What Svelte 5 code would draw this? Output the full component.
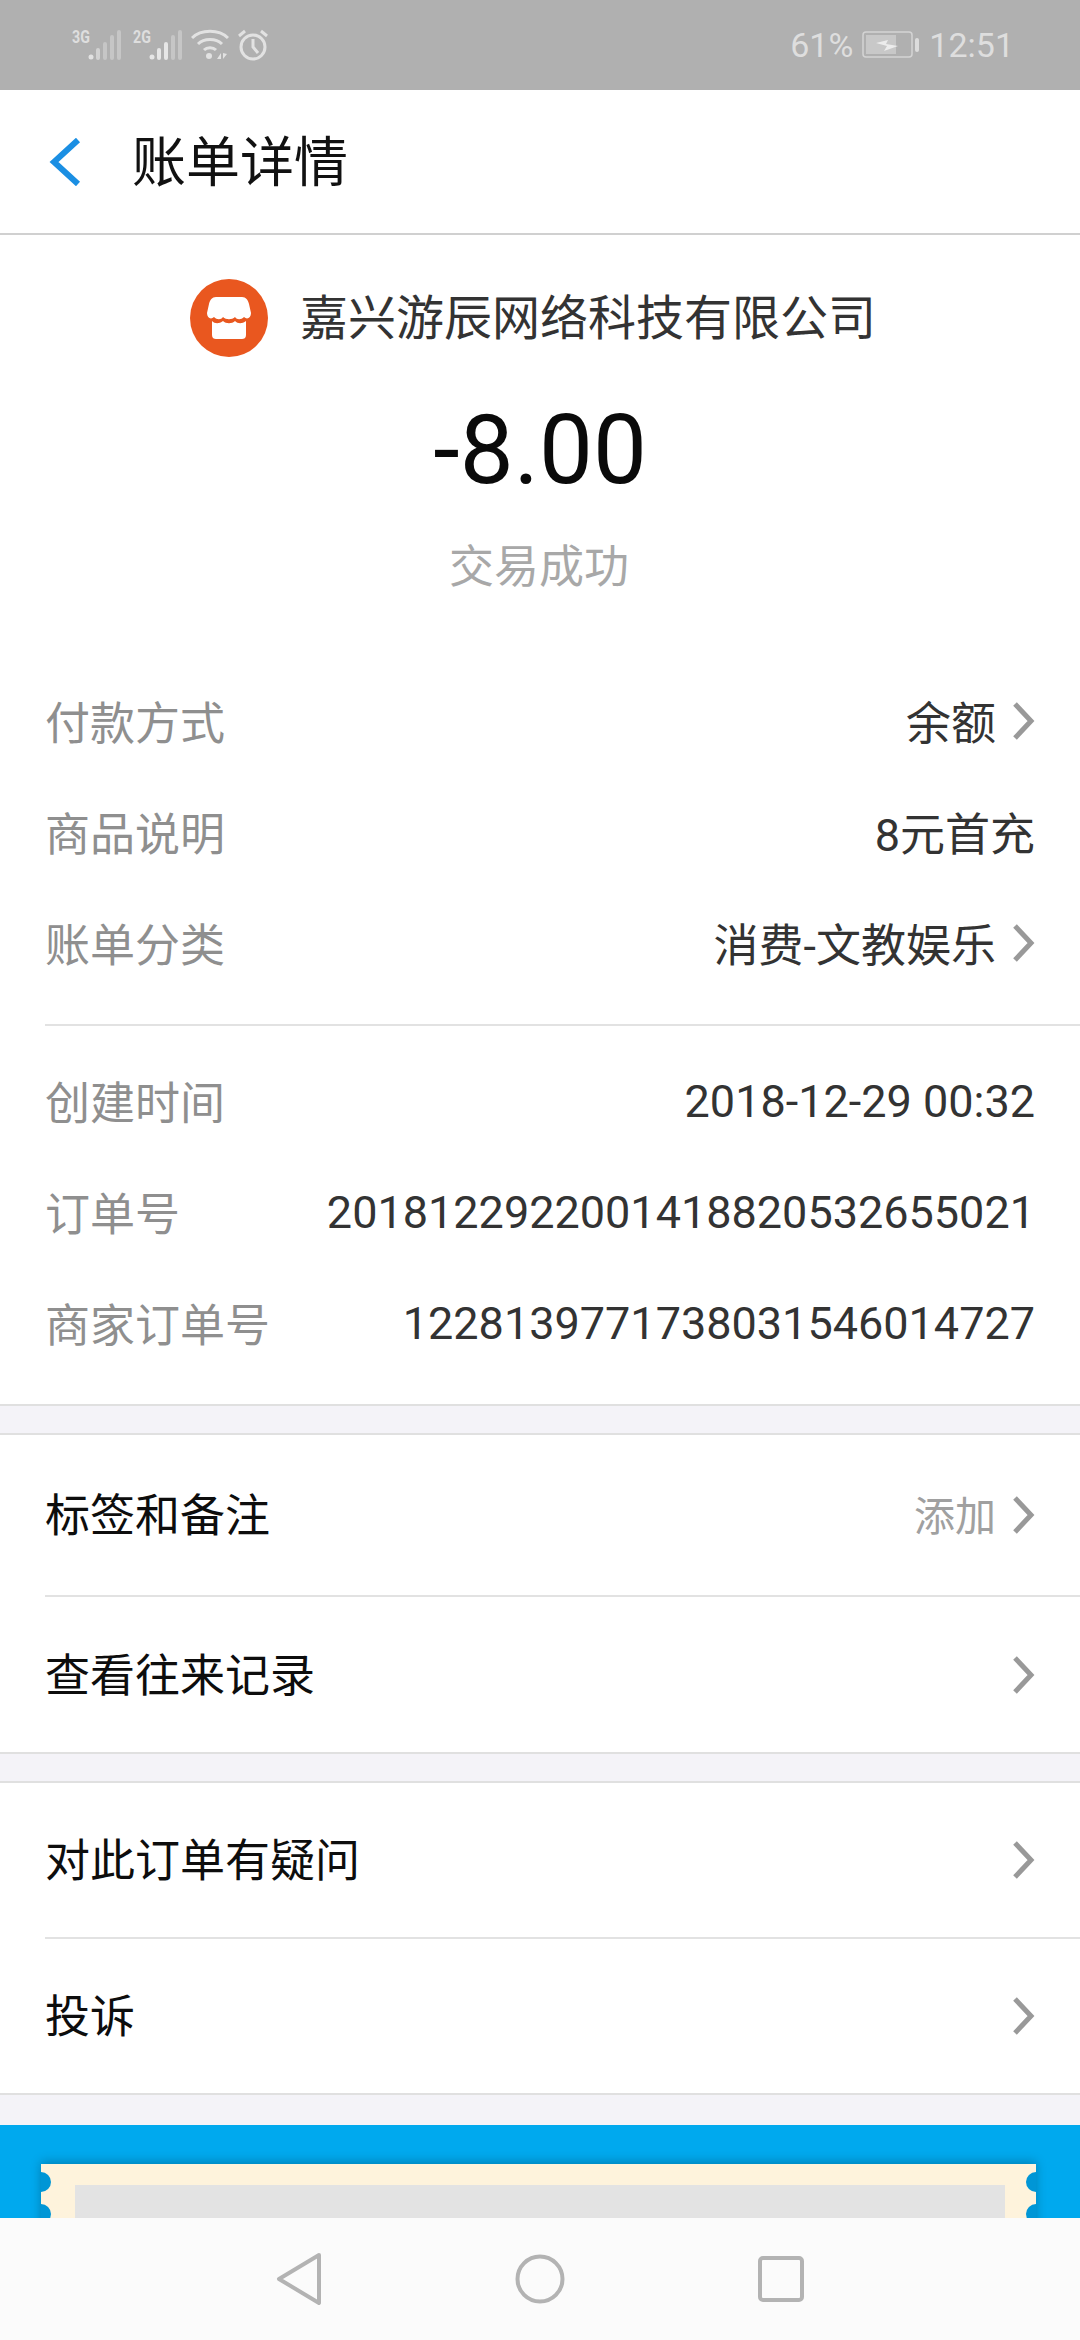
<script lang="ts">
	type Row = { label: string; value: string; more?: boolean };

	const payRows: Row[] = [
		{ label: '付款方式', value: '余额', more: true },
		{ label: '商品说明', value: '8元首充' },
		{ label: '账单分类', value: '消费-文教娱乐', more: true }
	];

	const orderRows: Row[] = [
		{ label: '创建时间', value: '2018-12-29 00:32' },
		{ label: '订单号', value: '2018122922001418820532655021' },
		{ label: '商家订单号', value: '1228139771738031546014727' }
	];
</script>

{#snippet chevron()}
	<svg class="chevron" viewBox="0 0 22 38" width="22" height="38" aria-hidden="true">
		<path d="M2 2 L18 19 L2 36" fill="none" stroke="#999" stroke-width="5" />
	</svg>
{/snippet}

<div class="page">
	<div class="status-bar">
		<div class="status-left">
			<span class="net">3G</span>
			<svg class="bars" viewBox="0 0 34 30" width="34" height="30">
				<circle cx="3" cy="27" r="2.5" fill="#e2e2e2" />
				<rect x="8" y="18" width="4" height="12" rx="2" fill="#d2d2d2" />
				<rect x="15" y="12" width="4" height="18" rx="2" fill="#c6c6c6" />
				<rect x="22" y="5" width="4" height="25" rx="2" fill="#c6c6c6" />
				<rect x="29" y="0" width="4" height="30" rx="2" fill="#c6c6c6" />
			</svg>
			<span class="net second">2G</span>
			<svg class="bars" viewBox="0 0 34 30" width="34" height="30">
				<circle cx="3" cy="27" r="2.5" fill="#e6e6e6" />
				<rect x="8" y="18" width="4" height="12" rx="2" fill="#e6e6e6" />
				<rect x="15" y="12" width="4" height="18" rx="2" fill="#e6e6e6" />
				<rect x="22" y="5" width="4" height="25" rx="2" fill="#c6c6c6" />
				<rect x="29" y="0" width="4" height="30" rx="2" fill="#c6c6c6" />
			</svg>
			<svg class="wifi" viewBox="0 0 38 32" width="38" height="32" fill="none" stroke="#e2e2e2" stroke-width="3">
				<path d="M1 9 C10 0 28 0 37 9" />
				<path d="M7 15 C13 9 25 9 31 15" />
				<path d="M13 21 C16 18 22 18 25 21" />
				<circle cx="18" cy="27" r="3" fill="#e2e2e2" stroke="none" />
				<path d="M26 30 L30 30 L30 24 Z M32 24 L32 30 L36 25 Z" fill="#e2e2e2" stroke="none" />
			</svg>
			<svg class="alarm" viewBox="0 0 32 32" width="32" height="32" fill="none" stroke="#e2e2e2" stroke-width="3">
				<circle cx="16" cy="18" r="12" />
				<path d="M16 10 L16 18 L21 24" />
				<path d="M2 7 L8 2" />
				<path d="M24 2 L30 7" />
			</svg>
		</div>
		<div class="status-right">
			<span>61%</span>
			<svg class="battery" viewBox="0 0 58 28" width="58" height="28">
				<rect x="1" y="1" width="49" height="25" rx="3" fill="none" stroke="#d4d4d4" stroke-width="1.5" />
				<rect x="4" y="4" width="30" height="19" fill="#c8c8c8" />
				<path d="M14 12 L26 9 L24 13 L36 15 L22 20 L25 15 Z" fill="#ececec" />
				<rect x="53" y="7" width="4" height="14" rx="2" fill="#dcdcdc" />
			</svg>
			<span>12:51</span>
		</div>
	</div>

	<header class="app-bar">
		<svg class="back" viewBox="0 0 34 48" width="34" height="48" aria-hidden="true">
			<path d="M30 2 L6 24 L30 46" fill="none" stroke="#1b8fe3" stroke-width="6" />
		</svg>
		<h1>账单详情</h1>
	</header>

	<section class="summary">
		<div class="merchant">
			<svg viewBox="0 0 78 78" width="78" height="78" aria-hidden="true">
				<circle cx="39" cy="39" r="39" fill="#e9571f" />
				<path
					d="M26 18 H52 C56 18 58 21 59 25 L61 34 C61 39 57 41 54 38 C51 41 47 41 45 38 C42 41 36 41 33 38 C31 41 27 41 24 38 C21 41 17 39 17 34 L19 25 C20 21 22 18 26 18 Z"
					fill="#fff"
				/>
				<path
					d="M22 42 C25 45 29 45 33 42 C36 45 42 45 45 42 C48 45 52 45 56 42 V56 C56 59 54 60 52 60 H26 C24 60 22 59 22 56 Z"
					fill="#fff"
				/>
			</svg>
			<span>嘉兴游辰网络科技有限公司</span>
		</div>
		<div class="amount">-8.00</div>
		<div class="result">交易成功</div>
	</section>

	<section class="details">
		<div class="group first">
			{#each payRows as row}
				<div class="row">
					<span class="label">{row.label}</span>
					<span class="value">{row.value}</span>
					{#if row.more}{@render chevron()}{/if}
				</div>
			{/each}
		</div>
		<div class="group second-group">
			{#each orderRows as row}
				<div class="row">
					<span class="label">{row.label}</span>
					<span class="value">{row.value}</span>
				</div>
			{/each}
		</div>
	</section>

	<section class="list">
		<div class="item h160">
			<span>标签和备注</span>
			<span class="hint">添加</span>
			{@render chevron()}
		</div>
		<div class="item h157">
			<span>查看往来记录</span>
			{@render chevron()}
		</div>
	</section>

	<section class="list">
		<div class="item h154">
			<span>对此订单有疑问</span>
			{@render chevron()}
		</div>
		<div class="item">
			<span>投诉</span>
			{@render chevron()}
		</div>
	</section>

	<div class="banner">
		<div class="ticket">
			<div class="ticket-inner"></div>
			<i class="notch left n1"></i>
			<i class="notch left n2"></i>
			<i class="notch right n1"></i>
			<i class="notch right n2"></i>
		</div>
	</div>

	<nav class="nav-bar">
		<svg viewBox="0 0 46 52" width="46" height="52" fill="none" stroke="#b3b3b3" stroke-width="4" stroke-linejoin="round">
			<path d="M43 2 L3 26 L43 50 Z" />
		</svg>
		<svg viewBox="0 0 50 50" width="50" height="50" fill="none" stroke="#b3b3b3" stroke-width="4">
			<circle cx="25" cy="25" r="22.5" />
		</svg>
		<svg viewBox="0 0 46 46" width="46" height="46" fill="none" stroke="#b3b3b3" stroke-width="4">
			<rect x="2" y="2" width="42" height="42" rx="3" />
		</svg>
	</nav>
</div>

<style>
	:global(body) {
		margin: 0;
		background: #f4f3f8;
	}

	.page {
		position: relative;
		width: 1080px;
		height: 2340px;
		overflow: hidden;
		display: flex;
		flex-direction: column;
		font-family: 'Noto Sans CJK SC', Roboto, sans-serif;
		background: #f4f3f8;
	}

	/* Status bar */
	.status-bar {
		height: 90px;
		flex: none;
		background: #b0b0b0;
		display: flex;
		justify-content: space-between;
		align-items: center;
		padding: 0 66px 0 72px;
		color: #dedede;
		font-family: Roboto, sans-serif;
	}

	.status-left,
	.status-right {
		display: flex;
		align-items: center;
	}

	.status-left {
		height: 32px;
	}

	.net {
		font-size: 19px;
		font-weight: 700;
		line-height: 16px;
		align-self: flex-start;
		width: 17px;
		transform: scaleX(0.75);
		transform-origin: left;
	}

	.net.second {
		margin-left: 11px;
	}

	.bars {
		margin-left: -1px;
	}

	.wifi {
		margin-left: 8px;
	}

	.alarm {
		margin-left: 8px;
	}

	.status-right {
		font-size: 34px;
		gap: 9px;
	}

	/* Header */
	.app-bar {
		height: 145px;
		flex: none;
		box-sizing: border-box;
		background: #fff;
		border-bottom: 2px solid #d0d0d0;
		display: flex;
		align-items: center;
		padding-left: 48px;
		gap: 50px;
	}

	.app-bar h1 {
		margin: 0 0 6px;
		font-size: 54px;
		font-weight: 400;
		color: #111;
		line-height: 1;
	}

	/* Summary */
	.summary {
		flex: none;
		height: 430px;
		background: #fff;
		display: flex;
		flex-direction: column;
		align-items: center;
	}

	.merchant {
		display: flex;
		align-items: center;
		gap: 32px;
		height: 78px;
		margin-top: 44px;
		margin-right: 14px;
		font-size: 48px;
		color: #333;
		white-space: nowrap;
	}

	.merchant span {
		padding-bottom: 8px;
	}

	.amount {
		font-family: Roboto, sans-serif;
		font-size: 96px;
		line-height: 100px;
		margin-top: 43px;
		color: #0a0a0a;
	}

	.result {
		font-size: 45px;
		line-height: 60px;
		margin-top: 34px;
		margin-right: 2px;
		color: #a8a8a8;
	}

	/* Detail rows */
	.details {
		flex: none;
		background: #fff;
		padding-left: 45px;
		border-bottom: 2px solid #e0e0e0;
	}

	.group.first {
		padding-bottom: 26px;
		border-bottom: 2px solid #e2e2e2;
	}

	.group.second-group {
		padding-top: 19px;
		padding-bottom: 26px;
	}

	.row {
		height: 111px;
		display: flex;
		align-items: center;
		padding-right: 45px;
		font-size: 45px;
	}

	.label {
		color: #8f8f8f;
		font-size: 45px;
		margin-right: auto;
		white-space: nowrap;
	}

	.value {
		color: #333;
		font-family: Roboto, 'Noto Sans CJK SC', sans-serif;
		white-space: nowrap;
	}

	.second-group .value {
		padding-top: 2px;
	}

	.chevron {
		flex: none;
		margin-left: 17px;
	}

	/* Link rows */
	.list {
		flex: none;
		margin-top: 27px;
		background: #fff;
		padding-left: 45px;
		border-top: 2px solid #e0e0e0;
		border-bottom: 2px solid #e0e0e0;
	}

	.item {
		height: 156px;
		box-sizing: border-box;
		display: flex;
		align-items: center;
		padding-right: 45px;
		font-size: 45px;
		color: #0d0d0d;
	}

	.item.h160 {
		height: 160px;
	}

	.item.h157 {
		height: 157px;
	}

	.item.h154 {
		height: 154px;
	}

	.item > span {
		padding-bottom: 5px;
	}

	.item > span:first-child {
		margin-right: auto;
	}

	.item + .item {
		border-top: 2px solid #e2e2e2;
	}

	.hint {
		font-size: 41px;
		color: #a0a0a0;
	}

	/* Banner */
	.banner {
		flex: 1;
		margin-top: 30px;
		background: #00a9ee;
		padding: 39px 44px 0 41px;
		overflow: hidden;
	}

	.ticket {
		position: relative;
		height: 120px;
		background: #fef3dc;
		padding: 21px 31px 0 34px;
		box-shadow: 0 -2px 10px #00000040;
		overflow: hidden;
	}

	.ticket-inner {
		height: 100px;
		background: #e3e3e3;
	}

	.notch {
		position: absolute;
		width: 20px;
		height: 20px;
		border-radius: 50%;
		background: #0096d6;
	}

	.notch.left {
		left: -10px;
	}

	.notch.right {
		right: -10px;
	}

	.notch.n1 {
		top: 8px;
	}

	.notch.n2 {
		top: 40px;
	}

	/* Navigation */
	.nav-bar {
		position: absolute;
		left: 0;
		right: 0;
		bottom: 0;
		height: 122px;
		background: #fbfbfb;
		display: flex;
		align-items: center;
		justify-content: center;
		gap: 193px;
	}
</style>
